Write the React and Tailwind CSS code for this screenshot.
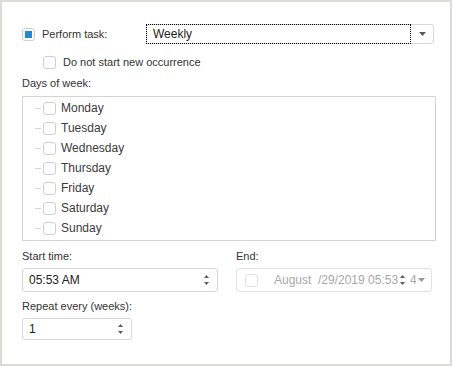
import React from 'react';

const font = { fontFamily: '"Liberation Sans", Arial, sans-serif' };

// Small checkbox used across the form
const Check = ({ checked, disabled }) => (
  <span
    className={`flex items-center justify-center w-[13px] h-[13px] rounded-[3px] border bg-white shrink-0 ${
      disabled ? 'border-[#e0e0e0]' : 'border-[#cfcfcf]'
    }`}
  >
    {checked && <span className="w-[7px] h-[7px] bg-[#1f8ad2]" />}
  </span>
);

const Spin = () => (
  <svg width="7" height="12" viewBox="0 0 7 12" className="shrink-0">
    <path d="M3.5 1 L6 4 L1 4 Z" fill="#5a5a5a" />
    <path d="M1 8 L6 8 L3.5 11 Z" fill="#5a5a5a" />
  </svg>
);

const Caret = ({ color = '#5a5a5a' }) => (
  <svg width="7" height="4" viewBox="0 0 7 4">
    <path d="M0 0 L7 0 L3.5 4 Z" fill={color} />
  </svg>
);

const days = ['Monday', 'Tuesday', 'Wednesday', 'Thursday', 'Friday', 'Saturday', 'Sunday'];

export default function App() {
  return (
    <div style={font} className="w-[452px] h-[366px] bg-white border-2 border-[#dcdcd6] text-[11px] text-[#333] pl-[20px] pt-[22px]">
      {/* Perform task row */}
      <div className="flex items-center h-[20px]">
        <Check checked />
        <span className="ml-[7px] w-[104px]">Perform task:</span>
        <div className="flex w-[288px] h-[20px] border border-[#d8d8d8] rounded-[3px]">
          <div className="flex-1 flex items-center pl-[6px] border border-dotted border-black -m-px mr-0 text-[12px] text-[#222]">
            Weekly
          </div>
          <div className="w-[22px] flex items-center justify-center">
            <Caret />
          </div>
        </div>
      </div>

      {/* Do not start */}
      <div className="flex items-center h-[20px] mt-[8px] pl-[21px]">
        <Check />
        <span className="ml-[7px]">Do not start new occurrence</span>
      </div>

      <div className="h-[16px] leading-[16px] mt-[3px]">Days of week:</div>

      {/* Days list */}
      <div className="mt-[5px] w-[414px] h-[145px] border border-[#d4d4d4] pt-[1px]">
        {days.map((d) => (
          <div key={d} className="flex items-center h-[20px] pl-[12px]">
            <span className="w-[6px] h-px bg-[#d6d6d6] mr-[2px]" />
            <Check />
            <span className="ml-[5px] text-[12px] text-[#3a3a3a]">{d}</span>
          </div>
        ))}
      </div>

      {/* Start / End */}
      <div className="flex gap-[18px] mt-[7px]">
        <div className="w-[196px]">
          <div className="h-[16px] leading-[16px]">Start time:</div>
          <div className="mt-[4px] h-[24px] border border-[#d8d8d8] rounded-[3px] flex items-center pl-[6px] pr-[7px]">
            <span className="flex-1 text-[12px] text-[#222]">05:53 AM</span>
            <Spin />
          </div>
        </div>
        <div className="w-[196px]">
          <div className="h-[16px] leading-[16px]">End:</div>
          <div className="mt-[4px] h-[24px] border border-[#e2e2e2] rounded-[3px] flex items-center pl-[8px] text-[12px] text-[#a8a8a8]">
            <Check disabled />
            <span className="ml-[16px] w-[44px]">August</span>
            <span className="w-[81px] overflow-hidden whitespace-nowrap">/29/2019 05:53</span>
            <Spin />
            <span className="w-[6px] overflow-hidden ml-[4px]">4</span>
            <span className="ml-[2px]"><Caret color="#9a9a9a" /></span>
          </div>
        </div>
      </div>

      <div className="h-[16px] leading-[16px] mt-[6px]">Repeat every (weeks):</div>
      <div className="mt-[4px] w-[110px] h-[22px] border border-[#d8d8d8] rounded-[3px] flex items-center pl-[6px] pr-[7px]">
        <span className="flex-1 text-[12px] text-[#222]">1</span>
        <Spin />
      </div>
    </div>
  );
}
